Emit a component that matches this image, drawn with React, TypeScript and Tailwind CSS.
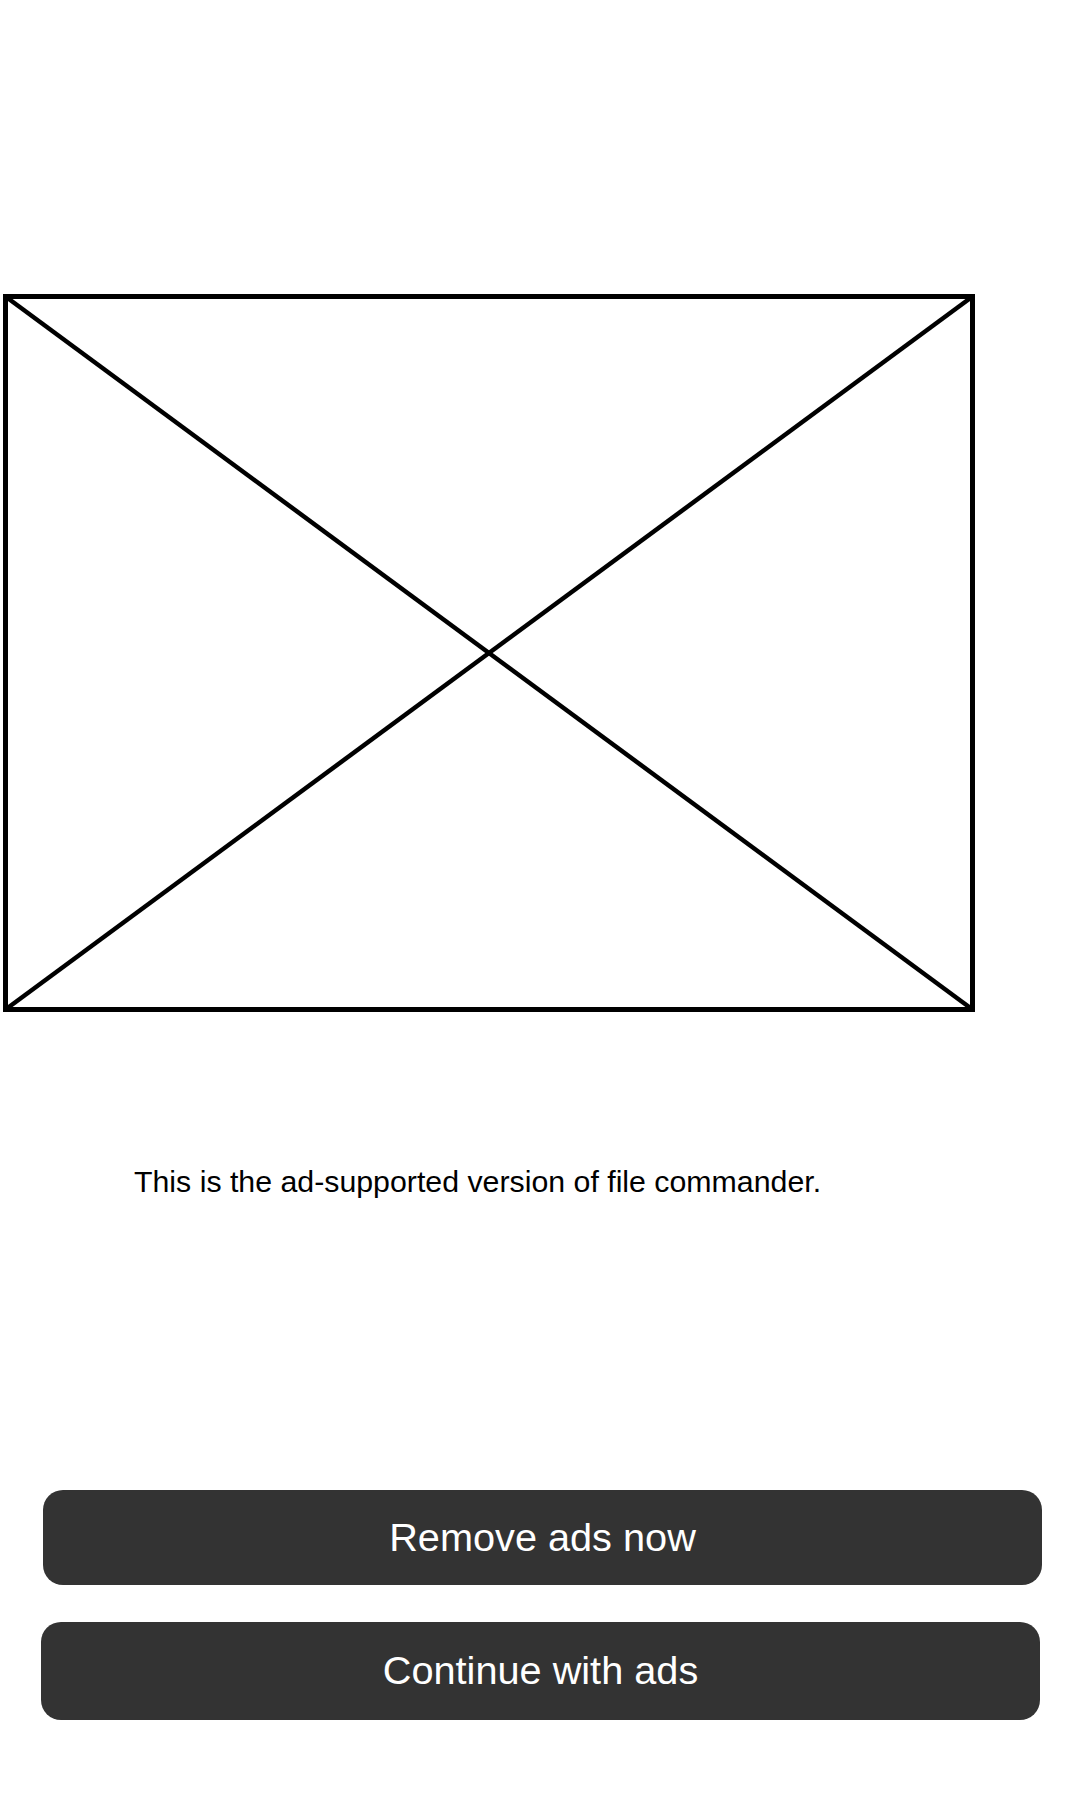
import React from "react";

const Placeholder = () => (
  <svg width="972" height="718" viewBox="0 0 972 718" className="block">
    <rect x="2.5" y="2.5" width="967" height="713" fill="none" stroke="#000" strokeWidth="5" />
    <line x1="2.5" y1="2.5" x2="969.5" y2="715.5" stroke="#000" strokeWidth="4.5" />
    <line x1="969.5" y1="2.5" x2="2.5" y2="715.5" stroke="#000" strokeWidth="4.5" />
  </svg>
);

export default function App() {
  return (
    <div className="w-[1080px] h-[1800px] bg-white flex flex-col font-['Liberation_Sans',Arial,sans-serif]">
      <div className="h-[294px]" />
      <div className="ml-[3px]">
        <Placeholder />
      </div>

      <p className="mt-[155px] pl-[134px] text-[30.3px] leading-none text-black">
        This is the ad-supported version of file commander.
      </p>

      <div className="mt-[293px] flex flex-col">
        <button className="ml-[43px] w-[999px] h-[95px] rounded-[20px] bg-[#333333] text-white text-[39.7px] leading-none">
          Remove ads now
        </button>
        <button className="mt-[37px] ml-[41px] w-[999px] h-[98px] rounded-[20px] bg-[#333333] text-white text-[39.7px] leading-none">
          Continue with ads
        </button>
      </div>
    </div>
  );
}
